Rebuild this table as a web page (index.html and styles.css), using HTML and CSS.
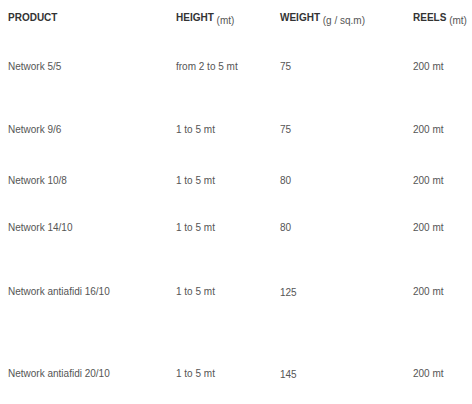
FILE: index.html
```html
<!DOCTYPE html>
<html>
<head>
<meta charset="utf-8">
<link rel="stylesheet" href="styles.css">
</head>
<body>
<table class="spec">
  <colgroup>
    <col class="c-product"><col class="c-height"><col class="c-weight"><col class="c-reels">
  </colgroup>
  <tr class="head">
    <th>PRODUCT</th>
    <th>HEIGHT <span class="unit">(mt)</span></th>
    <th>WEIGHT <span class="unit">(g / sq.m)</span></th>
    <th>REELS <span class="unit">(mt)</span></th>
  </tr>
  <tr class="r1">
    <td>Network 5/5</td><td>from 2 to 5 mt</td><td>75</td><td>200 mt</td>
  </tr>
  <tr class="r2">
    <td>Network 9/6</td><td>1 to 5 mt</td><td>75</td><td>200 mt</td>
  </tr>
  <tr class="r3">
    <td>Network 10/8</td><td>1 to 5 mt</td><td>80</td><td>200 mt</td>
  </tr>
  <tr class="r4">
    <td>Network 14/10</td><td>1 to 5 mt</td><td>80</td><td>200 mt</td>
  </tr>
  <tr class="r5">
    <td>Network antiafidi 16/10</td><td>1 to 5 mt</td><td class="low">125</td><td>200 mt</td>
  </tr>
  <tr class="r6">
    <td>Network antiafidi 20/10</td><td>1 to 5 mt</td><td class="low">145</td><td>200 mt</td>
  </tr>
</table>
</body>
</html>
```

FILE: styles.css
```css
html, body {
  margin: 0;
  padding: 0;
  background: #ffffff;
}
body {
  padding: 8px;
  font-family: "Liberation Sans", Arial, sans-serif;
  font-size: 10px;
  color: #555555;
}
.spec {
  border-collapse: collapse;
  border-spacing: 0;
  width: 464px;
  table-layout: fixed;
}
.c-product { width: 168px; }
.c-height { width: 104px; }
.c-weight { width: 133px; }
.c-reels { width: 59px; }
.spec th, .spec td {
  padding: 0;
  text-align: left;
  vertical-align: top;
  line-height: 12px;
  white-space: nowrap;
}
.spec th {
  font-weight: bold;
  color: #333333;
}
.spec .unit {
  font-weight: normal;
  color: #555555;
  position: relative;
  top: 3px;
}
.head th { height: 49px; padding-top: 4px; }
.r1 td { height: 63px; }
.r2 td { height: 51px; }
.r3 td { height: 47px; }
.r4 td { height: 64px; }
.r5 td { height: 81px; }
.r6 td { height: 24px; }
.spec td.low { padding-top: 1px; }
```
